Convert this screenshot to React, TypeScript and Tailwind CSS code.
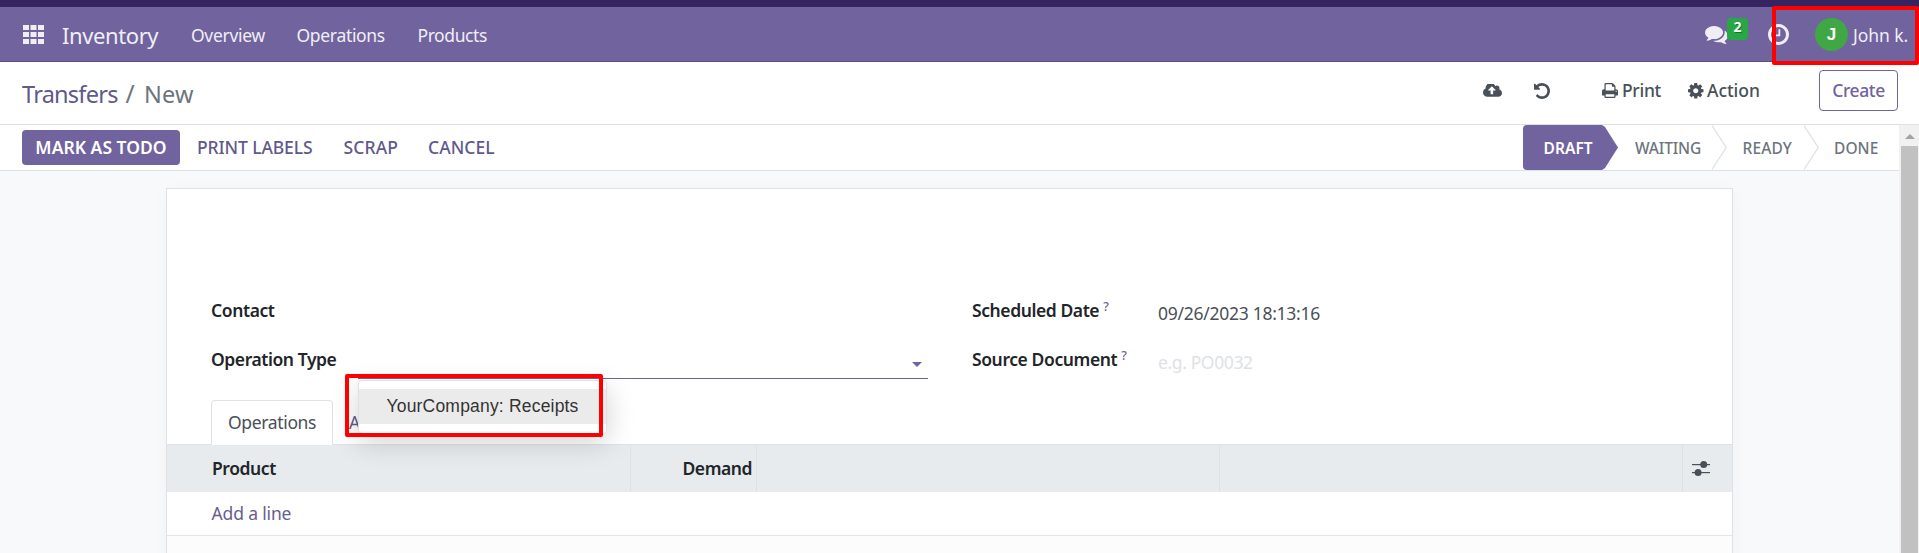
import type { ReactNode } from "react";

const icons = {
  comments: {
    box: "0 256 1792 1408",
    d: "M1408 768q0 139-94 257t-256.5 186.5-353.5 68.5q-86 0-176-16-124 88-278 128-36 9-86 16h-3q-11 0-20.5-8t-11.5-21q-1-3-1-6.5t.5-6.5 2-6l2.5-5 3.5-5.5 4-5 4.5-5 4-4.5q5-6 23-25t26-29.5 22.5-29 25-38.5 20.5-44q-124-72-195-177t-71-224q0-139 94-257t256.5-186.5 353.5-68.5 353.5 68.5 256.5 186.5 94 257zm384 256q0 120-71 224.5t-195 176.5q10 24 20.5 44t25 38.5 22.5 29 26 29.5 23 25q1 1 4 4.5t4.5 5 4 5 3.5 5.5l2.5 5 2 6 .5 6.5-1 6.5q-3 14-13 22t-22 7q-50-7-86-16-154-40-278-128-90 16-176 16-271 0-472-132 58 4 88 4 161 0 309-45t264-129q125-92 192-212t67-254q0-77-23-152 129 71 204 178t75 230z",
  },
  clock: {
    box: "128 128 1536 1536",
    d: "M1024 544v448q0 14-9 23t-23 9h-320q-14 0-23-9t-9-23v-64q0-14 9-23t23-9h224v-352q0-14 9-23t23-9h64q14 0 23 9t9 23zm416 352q0-148-73-273t-198-198-273-73-273 73-198 198-73 273 73 273 198 198 273 73 273-73 198-198 73-273zm224 0q0 209-103 385.5t-279.5 279.5-385.5 103-385.5-103-279.5-279.5-103-385.5 103-385.5 279.5-279.5 385.5-103 385.5 103 279.5 279.5 103 385.5z",
  },
  upload: {
    box: "-64 256 1920 1280",
    d: "M1216 864q0-14-9-23l-352-352q-9-9-23-9t-23 9l-351 351q-10 12-10 24 0 14 9 23t23 9h224v352q0 13 9.5 22.5t22.5 9.5h192q13 0 22.5-9.5t9.5-22.5v-352h224q13 0 22.5-9.5t9.5-22.5zm640 288q0 159-112.5 271.5t-271.5 112.5h-1088q-185 0-316.5-131.5t-131.5-316.5q0-130 70-240t188-165q-2-30-2-43 0-212 150-362t362-150q156 0 285.5 87t188.5 231q71-62 166-62 106 0 181 75t75 181q0 76-41 138 130 31 213.5 135.5t83.5 238.5z",
  },
  undo: {
    box: "128 128 1536 1536",
    d: "M1664 896q0 156-61 298t-164 245-245 164-298 61q-172 0-327-72.5t-264-204.5q-7-10-6.5-22.5t8.5-20.5l137-138q10-9 25-9 16 2 23 12 73 95 179 147t225 52q104 0 198.5-40.5t163.5-109.5 109.5-163.5 40.5-198.5-40.5-198.5-109.5-163.5-163.5-109.5-198.5-40.5q-98 0-188 35.5t-160 101.5l137 138q31 30 14 69-17 40-59 40h-448q-26 0-45-19t-19-45v-448q0-42 40-59 39-17 69 14l130 129q107-101 244.5-156.5t284.5-55.5q156 0 298 61t245 164 164 245 61 298z",
  },
  print: {
    box: "64 128 1664 1536",
    d: "M448 1536h896v-256h-896v256zm0-640h896v-384h-160q-40 0-68-28t-28-68v-160h-640v640zm1152 64q0-26-19-45t-45-19-45 19-19 45 19 45 45 19 45-19 19-45zm128 0v416q0 13-9.5 22.5t-22.5 9.5h-224v160q0 40-28 68t-68 28h-960q-40 0-68-28t-28-68v-160h-224q-13 0-22.5-9.5t-9.5-22.5v-416q0-79 56.5-135.5t135.5-56.5h64v-544q0-40 28-68t68-28h672q40 0 88 20t76 48l152 152q28 28 48 76t20 88v256h64q79 0 135.5 56.5t56.5 135.5z",
  },
  cog: {
    box: "128 128 1536 1536",
    d: "M1152 896q0-106-75-181t-181-75-181 75-75 181 75 181 181 75 181-75 75-181zm512-109v222q0 12-8 23t-20 13l-185 28q-19 54-39 91 35 50 107 138 10 12 10 25t-9 23q-27 37-99 108t-94 71q-12 0-26-9l-138-108q-44 23-91 38-16 136-29 186-7 28-36 28h-222q-14 0-24.5-8.5t-11.5-21.5l-28-184q-49-16-90-37l-141 107q-10 9-25 9-14 0-25-11-126-114-165-168-7-10-7-23 0-12 8-23 15-21 51-66.5t54-70.5q-27-50-41-99l-183-27q-13-2-21-12.5t-8-23.5v-222q0-12 8-23t19-13l186-28q14-46 39-92-40-57-107-138-10-12-10-24 0-10 9-23 26-36 98.5-107.5t94.5-71.5q13 0 26 10l138 107q44-23 91-38 16-136 29-186 7-28 36-28h222q14 0 24.5 8.5t11.5 21.5l28 184q49 16 90 37l142-107q9-9 24-9 13 0 25 10 129 119 165 170 7 8 7 22 0 12-8 23-15 21-51 66.5t-54 70.5q26 50 41 98l183 28q13 2 21 12.5t8 23.5z",
  },
};

function Icon({ name, className }: { name: keyof typeof icons; className: string }) {
  return (
    <svg viewBox={icons[name].box} fill="currentColor" className={`block shrink-0 ${className}`}>
      <path d={icons[name].d} />
    </svg>
  );
}

/* Single-line text in a box of fixed width. */
function T({ className, children }: { className: string; children: ReactNode }) {
  return <span className={`block shrink-0 whitespace-nowrap leading-6 ${className}`}>{children}</span>;
}

function Navbar() {
  return (
    <header className="flex h-[62px] flex-col border-t-[7px] border-b border-t-[#35245f] border-b-[#5a4f7f] bg-[#71639e] text-[#f0eef5]">
      <div className="flex h-[54px] items-start">
        <svg viewBox="0 0 21 19" className="ml-[23px] mt-[18px] h-[19px] w-[21px] shrink-0" fill="currentColor">
          {[0, 7, 14].map((y) =>
            [0, 7.5, 15].map((x) => <rect key={`${x}-${y}`} x={x} y={y} width="6" height="5" />)
          )}
        </svg>
        <T className="ml-[18px] mt-[16px] w-[129px] text-[22px] tracking-[-0.4px]">Inventory</T>
        <T className="mt-[16px] w-[105.5px] tracking-[-0.3px]">Overview</T>
        <T className="mt-[16px] w-[121px] tracking-[-0.32px]">Operations</T>
        <T className="mt-[16px] tracking-[-0.42px]">Products</T>
        <div className="flex-1" />
        <Icon name="comments" className="mt-[18.5px] h-[18px] w-[23px]" />
        <span className="mt-[10.5px] -ml-px flex h-[22px] w-[21px] items-start justify-center rounded-[4px] bg-[#28a745] text-[14px] leading-[18px] font-bold text-white [text-shadow:1px_1px_0_rgba(0,0,0,0.35)]">
          2
        </span>
        <Icon name="clock" className="mt-[17px] ml-5 h-[21px] w-[21px]" />
        <span className="mt-[11px] ml-[26px] flex h-[33px] w-[33px] items-center justify-center rounded-full bg-[#3fa845] font-['Liberation_Sans',sans-serif] text-[17px] leading-none font-bold text-white">
          J
        </span>
        <T className="mt-[16px] ml-[5px] w-[66px] tracking-[-0.05px]">John k.</T>
      </div>
    </header>
  );
}

function ControlPanel() {
  return (
    <div className="flex h-[63px] items-start border-b border-[#dee2e6] bg-white text-[#495057]">
      <T className="mt-[20px] ml-[22px] w-[103.5px] text-[23.5px] tracking-[-0.75px] text-[#5f5a8c]">Transfers</T>
      <T className="mt-[20px] w-[18.5px] text-[24.5px] text-[#6c757d]">/</T>
      <T className="mt-[20px] text-[23.5px] tracking-[0.2px] text-[#6c757d]">New</T>
      <div className="flex-1" />
      <Icon name="upload" className="mt-[22px] h-[13px] w-[19px]" />
      <Icon name="undo" className="mt-[21px] ml-[32px] h-[16px] w-[16px]" />
      <Icon name="print" className="mt-[21px] ml-[52.5px] h-[15px] w-[16px]" />
      <T className="mt-[16px] ml-[4px] w-[66px] font-medium tracking-[-0.3px]">Print</T>
      <Icon name="cog" className="mt-[21px] h-[15.5px] w-[15.5px]" />
      <T className="mt-[16px] ml-[3.5px] w-[112px] font-medium tracking-[-0.05px]">Action</T>
      <button className="mt-[8px] mr-[21px] flex h-[41px] w-[79px] items-center justify-center rounded-[4px] border border-[#71639e] pb-px font-medium tracking-[-0.4px] text-[#71639e]">
        Create
      </button>
    </div>
  );
}

function Chevron() {
  return (
    <svg viewBox="0 0 15 45" className="block h-[45px] w-[15px] shrink-0" fill="none" stroke="#dee2e6" strokeWidth="1.3">
      <path d="M0 0.5L14.2 22.5L0 44.5" />
    </svg>
  );
}

function StatusBar() {
  return (
    <div className="flex h-[46px] items-start border-b border-[#dee2e6] bg-white font-medium text-[#5f5a8c]">
      <button className="mt-[5px] ml-[22px] flex h-[35px] w-[158px] items-start justify-center rounded-[4px] bg-[#71639e] pt-[5px] leading-6 font-semibold tracking-[0.02px] text-white">
        MARK AS TODO
      </button>
      <T className="mt-[10px] ml-[17px] w-[146.5px] tracking-[-0.12px]">PRINT LABELS</T>
      <T className="mt-[10px] w-[84.5px] tracking-[0.15px]">SCRAP</T>
      <T className="mt-[10px] tracking-[0.03px]">CANCEL</T>
      <div className="flex-1" />
      <div className="flex text-[15.5px] text-[#6c757d]">
        <div className="h-[45px] w-[95px] rounded-l-[4px] bg-[#71639e] pt-[11px] pl-[20.5px] font-semibold text-white [clip-path:polygon(0_0,79px_0,82px_2px,95px_50%,82px_43px,79px_100%,0_100%)]">
          <T className="tracking-[0.05px]">DRAFT</T>
        </div>
        <T className="mt-[11px] ml-[17px] w-[77px] tracking-[-0.15px]">WAITING</T>
        <Chevron />
        <T className="mt-[11px] ml-[15.5px] w-[61.5px] tracking-[0.1px]">READY</T>
        <Chevron />
        <T className="mt-[11px] ml-[15px] w-[65px] tracking-[0.05px]">DONE</T>
      </div>
    </div>
  );
}

function Help() {
  return <sup className="relative -top-[6px] ml-[4px] align-baseline text-[12.5px] leading-none font-medium text-[#71639e]">?</sup>;
}

function Dropdown() {
  return (
    <div className="absolute top-[1px] left-0 z-10 h-[54px] w-[249px] rounded-[4px] border border-[#dee2e6] bg-white pt-[8px] shadow-[0_8px_28px_rgba(0,0,0,0.18)]">
      <div className="h-[35px] bg-[#ebebeb] pt-[4.5px] pl-[27.5px] font-['Liberation_Sans',sans-serif] text-[17.5px] leading-6 tracking-[0.19px] whitespace-nowrap text-[#333]">
        YourCompany: Receipts
      </div>
    </div>
  );
}

function Sheet() {
  return (
    <main className="mt-[17px] ml-[166px] h-[380px] w-[1567px] border border-[#dee2e6] bg-white text-[#212529] shadow-[0_4px_16px_rgba(40,40,80,0.035)]">
      <div className="flex h-[211px] px-[44px] pt-[109px]">
        <div className="w-[761px] font-semibold">
          <T className="h-[49px] tracking-[-0.4px]">Contact</T>
          <div className="flex">
            <T className="w-[147px] tracking-[-0.43px]">Operation Type</T>
            <div className="relative h-[32px] w-[570px] border-b border-[#71639e] font-normal">
              <svg viewBox="0 0 10 5" className="mt-[15px] ml-[554px] h-[5px] w-[10px]" fill="#71639e">
                <path d="M0 0h10L5 5z" />
              </svg>
              <div className="absolute top-[32px] left-0">
                <Dropdown />
              </div>
            </div>
          </div>
        </div>
        <div className="w-[186px] font-semibold">
          <T className="h-[49px] tracking-[-0.42px]">Scheduled Date<Help /></T>
          <T className="h-[49px] tracking-[-0.4px]">Source Document<Help /></T>
        </div>
        <div className="pt-[3px]">
          <T className="h-[49px] tracking-[-0.27px] text-[#495057]">09/26/2023 18:13:16</T>
          <T className="tracking-[-0.38px] text-[#dee2e6]">e.g. PO0032</T>
        </div>
      </div>

      <div className="flex h-[45px] items-start border-b border-[#dee2e6] pl-[44px]">
        <div className="h-[45px] w-[122px] rounded-t-[4px] border border-b-0 border-[#dee2e6] bg-white pt-[9px] pl-[16px] text-[#495057]">
          <T className="tracking-[-0.35px]">Operations</T>
        </div>
        <T className="mt-[10px] ml-[16px] w-[10px] overflow-hidden text-[#5f5a8c]">A</T>
      </div>

      <div className="flex h-[47px] bg-[#e7ebee] font-semibold">
        <div className="w-[464px] border-r border-[#dde1e5] pt-[11px] pl-[45px]">
          <T className="tracking-[-0.42px]">Product</T>
        </div>
        <div className="flex w-[126px] justify-end border-r border-[#dde1e5] pt-[11px] pr-[4px]">
          <T className="tracking-[-0.45px]">Demand</T>
        </div>
        <div className="w-[463px] border-r border-[#dde1e5]" />
        <div className="w-[463px] border-r border-[#dde1e5]" />
        <svg viewBox="0 0 18 16" className="mt-[16px] ml-[9px] h-[16px] w-[18px] text-[#495057]" fill="currentColor">
          <rect x="0" y="3" width="18" height="1.2" />
          <rect x="0" y="11" width="18" height="1.2" />
          <circle cx="11.7" cy="3.6" r="3.5" />
          <circle cx="6.1" cy="11.6" r="3.5" />
        </svg>
      </div>
      <div className="h-[44px] border-b border-[#e3e6e9] pt-[9px] pl-[44.5px] text-[#66608f]">
        <T className="tracking-[-0.15px]">Add a line</T>
      </div>
      <div className="h-[31px] bg-[#fcfcfc]" />
    </main>
  );
}

function Scrollbar() {
  return (
    <div className="flex w-[20px] flex-col items-center bg-[#f1f1f1] pt-[9px]">
      <svg viewBox="0 0 10 5" className="ml-px h-[5px] w-[10px] shrink-0" fill="#a3a3a3">
        <path d="M0 5h10L5 0z" />
      </svg>
      <div className="mt-[7px] ml-px w-[17px] flex-1 bg-[#c1c1c1]" />
    </div>
  );
}

export default function App() {
  return (
    <div className="relative flex h-[553px] w-[1919px] flex-col overflow-hidden bg-[#f8f9fa] font-['Noto_Sans',sans-serif] text-[17.5px]">
      <Navbar />
      <ControlPanel />
      <div className="flex h-[428px]">
        <div className="w-[1899px] overflow-hidden">
          <StatusBar />
          <Sheet />
        </div>
        <Scrollbar />
      </div>
      <div className="absolute top-[5.5px] left-[1772px] z-20 h-[59px] w-[147px] rounded-[2px] border-4 border-[#ff0000]" />
      <div className="absolute top-[373.5px] left-[345px] z-20 h-[63.5px] w-[258px] rounded-[2px] border-4 border-[#ff0000]" />
    </div>
  );
}
